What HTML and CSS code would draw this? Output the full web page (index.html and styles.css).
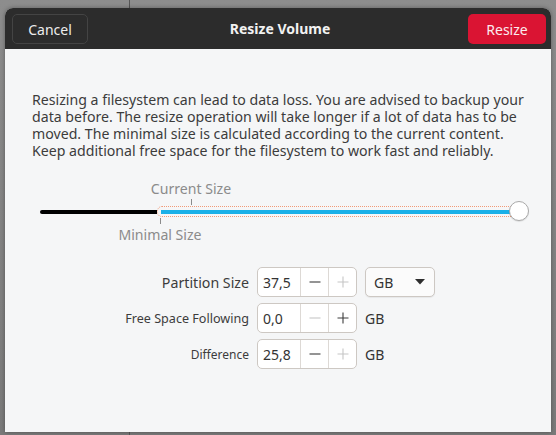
FILE: index.html
```html
<!DOCTYPE html>
<html>
<head>
<meta charset="utf-8">
<link rel="stylesheet" href="styles.css">
</head>
<body>
<div class="dialog">
  <header class="header">
    <button class="btn btn-cancel">Cancel</button>
    <div class="title">Resize Volume</div>
    <button class="btn btn-resize">Resize</button>
  </header>
  <main class="content">
    <p class="warning">Resizing a filesystem can lead to data loss. You are advised to backup your<br>data before. The resize operation will take longer if a lot of data has to be<br>moved. The minimal size is calculated according to the current content.<br>Keep additional free space for the filesystem to work fast and reliably.</p>

    <div class="slider">
      <div class="mark mark-current">
        <span class="mark-label">Current Size</span>
        <span class="tick"></span>
      </div>
      <div class="track">
        <div class="fixed"></div>
        <div class="range"><div class="fill"></div></div>
      </div>
      <div class="knob"></div>
      <div class="mark mark-min">
        <span class="tick"></span>
        <span class="mark-label">Minimal Size</span>
      </div>
    </div>

    <div class="form">
      <label class="lbl">Partition Size</label>
      <div class="spin">
        <span class="val">37,5</span>
        <span class="sbtn"><svg width="12" height="12" viewBox="0 0 12 12"><path d="M0.5 6h11" stroke="#3c3c3c" stroke-width="1.1"/></svg></span>
        <span class="sbtn"><svg width="12" height="12" viewBox="0 0 12 12"><path d="M0.5 6h11M6 0.5v11" stroke="#c6c6c6" stroke-width="1.1"/></svg></span>
      </div>
      <div class="combo"><span>GB</span><svg width="10" height="6" viewBox="0 0 10 6"><path d="M0 0h10L5 5.5z" fill="#2e2e2e"/></svg></div>

      <label class="lbl lbl-free">Free Space Following</label>
      <div class="spin">
        <span class="val">0,0</span>
        <span class="sbtn"><svg width="12" height="12" viewBox="0 0 12 12"><path d="M0.5 6h11" stroke="#c6c6c6" stroke-width="1.1"/></svg></span>
        <span class="sbtn"><svg width="12" height="12" viewBox="0 0 12 12"><path d="M0.5 6h11M6 0.5v11" stroke="#3c3c3c" stroke-width="1.1"/></svg></span>
      </div>
      <span class="unit">GB</span>

      <label class="lbl lbl-diff">Difference</label>
      <div class="spin">
        <span class="val">25,8</span>
        <span class="sbtn"><svg width="12" height="12" viewBox="0 0 12 12"><path d="M0.5 6h11" stroke="#3c3c3c" stroke-width="1.1"/></svg></span>
        <span class="sbtn"><svg width="12" height="12" viewBox="0 0 12 12"><path d="M0.5 6h11M6 0.5v11" stroke="#c6c6c6" stroke-width="1.1"/></svg></span>
      </div>
      <span class="unit">GB</span>
    </div>
  </main>
</div>
</body>
</html>
```

FILE: styles.css
```css
html, body {
  margin: 0;
  padding: 0;
}
body {
  width: 556px;
  height: 435px;
  overflow: hidden;
  background:
    linear-gradient(to right, transparent 129px, #555 129px, #555 130px, transparent 130px),
    linear-gradient(to bottom, #8d8d8d, #7a7a7a);
  font-family: "Noto Sans", "DejaVu Sans", sans-serif;
  color: #3c3c3c;
}
.dialog {
  margin: 8px 5px 0 5px;
  height: 424px;
  background: #f5f6f7;
  border-radius: 8px 8px 0 0;
  overflow: hidden;
  box-shadow: 0 0 4px rgba(0,0,0,0.35);
}
.header {
  height: 41px;
  box-sizing: border-box;
  background: #2c2c2c;
  display: flex;
  align-items: center;
  justify-content: space-between;
  padding: 0 5px 0 7px;
}
.btn {
  height: 30px;
  border-radius: 5px;
  font-family: inherit;
  font-size: 14px;
  padding: 0;
  margin-top: 1px;
}
.btn-cancel {
  width: 76px;
  background: #2c2c2c;
  border: 1px solid #444;
  color: #ececec;
}
.btn-resize {
  width: 78px;
  background: #da1433;
  border: none;
  color: #fbecee;
}
.title {
  color: #f2f2f2;
  font-weight: bold;
  font-size: 14px;
  margin-left: 4px;
}
.content {
  padding: 0;
}
.warning {
  margin: 42px 0 0 27px;
  font-size: 14.15px;
  line-height: 17px;
  color: #3c3c3c;
}
.slider {
  position: relative;
  height: 64px;
  margin-top: 21px;
}
.track {
  position: absolute;
  left: 35px;
  top: 26px;
  display: flex;
  align-items: center;
}
.fixed {
  width: 117px;
  height: 4px;
  background: #000;
  border-radius: 2px 0 0 2px;
}
.range {
  width: 356px;
  height: 11px;
  box-sizing: border-box;
  border: 1px dotted #f29a77;
  border-radius: 5px 0 0 5px;
  display: flex;
  align-items: center;
  padding-left: 3px;
}
.fill {
  flex: 1;
  height: 4px;
  background: #19b0e8;
}
.knob {
  position: absolute;
  left: 504px;
  top: 21px;
  width: 18px;
  height: 18px;
  border-radius: 50%;
  background: #fff;
  border: 1px solid #a9a9a9;
  box-shadow: 0 1px 1px rgba(0,0,0,0.1);
}
.mark {
  position: absolute;
  display: flex;
  flex-direction: column;
  align-items: center;
  width: 120px;
}
.mark-current {
  left: 126px;
  top: 0;
}
.mark-min {
  left: 95px;
  top: 38px;
}
.mark-label {
  font-size: 14.1px;
  color: #8b8b8b;
  line-height: 17px;
}
.tick {
  display: block;
  width: 1px;
  height: 6px;
  background: #8b8b8b;
}
.mark-current .tick { margin-top: 2px; }
.mark-min .tick { margin-bottom: 2px; }
.form {
  display: grid;
  grid-template-columns: 244px 100px auto;
  column-gap: 8px;
  row-gap: 6px;
  align-items: center;
  justify-items: start;
  margin-top: 23px;
}
.lbl {
  justify-self: end;
  font-size: 14.2px;
  color: #3c3c3c;
}
.lbl-free {
  font-size: 12.6px;
}
.lbl-diff {
  font-size: 12px;
}
.spin {
  width: 100px;
  height: 30px;
  box-sizing: border-box;
  background: #fff;
  border: 1px solid #cdc8c3;
  border-radius: 5px;
  display: flex;
  align-items: stretch;
}
.val {
  width: 42px;
  box-sizing: border-box;
  padding-left: 5px;
  font-size: 14px;
  display: flex;
  align-items: center;
  color: #333;
}
.sbtn {
  flex: 1;
  border-left: 1px solid #ddd9d5;
  display: flex;
  align-items: center;
  justify-content: center;
}
.combo {
  width: 70px;
  height: 30px;
  box-sizing: border-box;
  background: #fbfbfb;
  border: 1px solid #cdc8c3;
  border-radius: 5px;
  box-shadow: 0 1px 1px rgba(0,0,0,0.06);
  display: flex;
  align-items: center;
  justify-content: space-between;
  padding: 0 9px 0 8px;
  font-size: 14px;
  color: #333;
}
.unit {
  font-size: 14px;
  color: #333;
}
```
